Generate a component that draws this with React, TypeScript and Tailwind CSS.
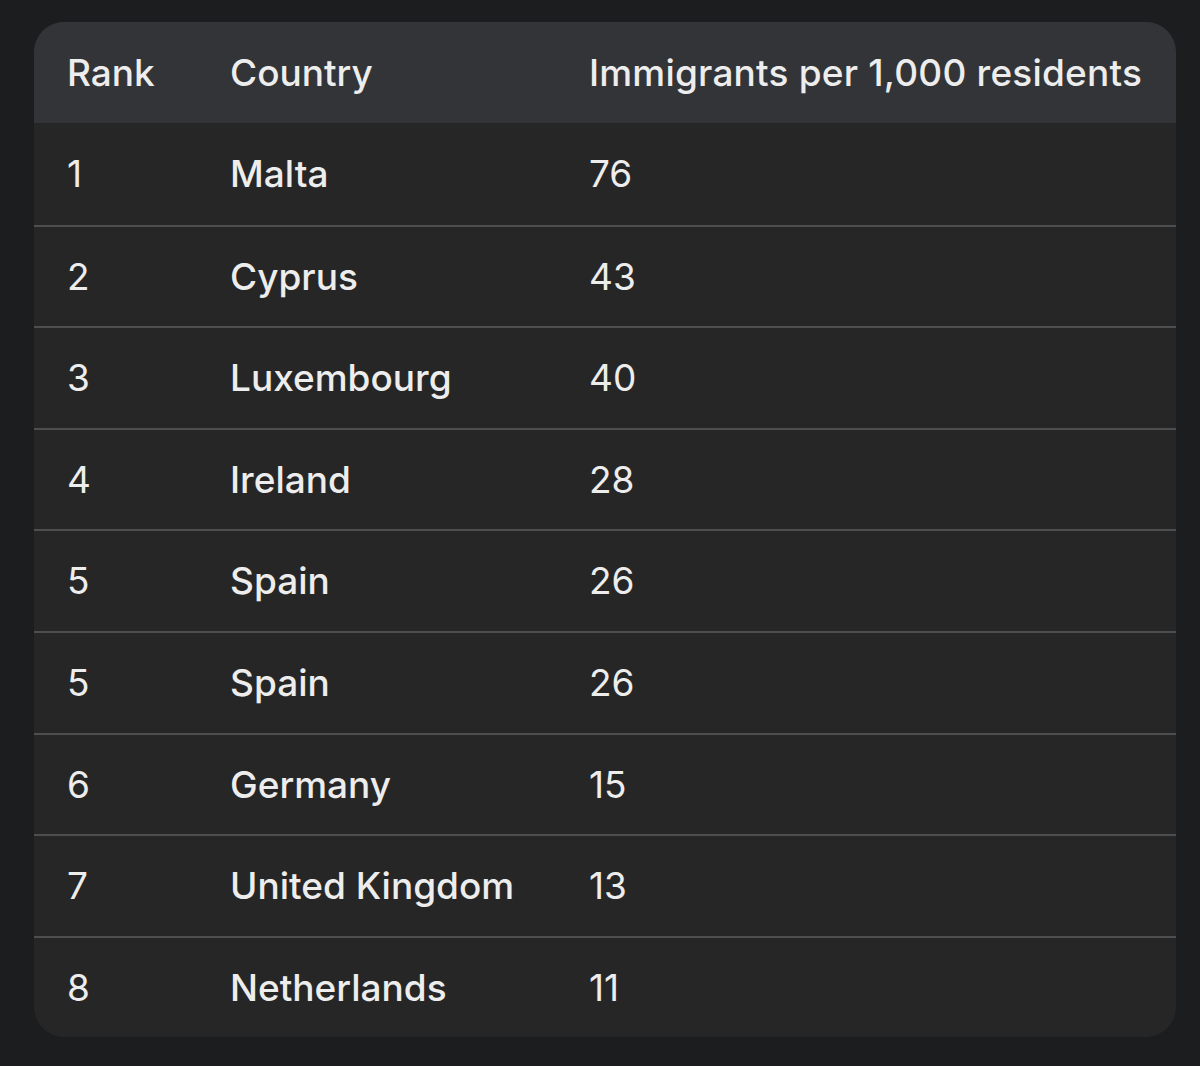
const rows = [
  { rank: 1, country: "Malta", value: 76 },
  { rank: 2, country: "Cyprus", value: 43 },
  { rank: 3, country: "Luxembourg", value: 40 },
  { rank: 4, country: "Ireland", value: 28 },
  { rank: 5, country: "Spain", value: 26 },
  { rank: 5, country: "Spain", value: 26 },
  { rank: 6, country: "Germany", value: 15 },
  { rank: 7, country: "United Kingdom", value: 13 },
  { rank: 8, country: "Netherlands", value: 11 },
];

export default function App() {
  return (
    <div
      className="min-h-screen bg-[#1c1d1f] pt-[22px] pl-[34px] pr-[24px]"
      style={{ fontFamily: "Inter, 'Open Sans', sans-serif" }}
    >
      <div className="w-[1142px] rounded-[30px] overflow-hidden bg-[#262626] text-[#ededed] text-[37px]">
        {/* Header */}
        <div className="flex items-center h-[101px] bg-[#333437] font-medium">
          <div className="w-[163px] pl-[33px]">Rank</div>
          <div className="w-[359px] pl-[33px]">Country</div>
          <div className="flex-1 pl-[33px] tracking-[0.2px]">Immigrants per 1,000 residents</div>
        </div>

        {/* Rows */}
        {rows.map((row, i) => (
          <div
            key={i}
            className={`flex items-center h-[101.6px] box-border ${
              i > 0 ? "border-t-2 border-[#4c4e50]" : ""
            }`}
          >
            <div className="w-[163px] pl-[33px]">{row.rank}</div>
            <div className="w-[359px] pl-[33px] font-medium">{row.country}</div>
            <div className="flex-1 pl-[33px]">{row.value}</div>
          </div>
        ))}
      </div>
    </div>
  );
}
